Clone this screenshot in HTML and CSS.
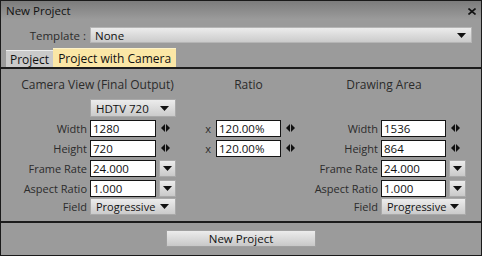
FILE: index.html
```html
<!DOCTYPE html>
<html>
<head>
<meta charset="utf-8">
<link rel="stylesheet" href="styles.css">
</head>
<body>
<div class="win">
  <div class="titlebar">
    <span class="title">New Project</span>
    <svg class="close" width="8" height="7" viewBox="0 0 8 7"><path d="M0.5 0.5 L7.5 6.5 M7.5 0.5 L0.5 6.5" stroke="#111" stroke-width="1.6" fill="none"/></svg>
  </div>
  <div class="top">
    <div class="tpl-row">
      <span class="tpl-label">Template :</span>
      <div class="select wide"><span>None</span><svg class="arrow" width="9" height="5" viewBox="0 0 9 5"><path d="M0 0 H9 L4.5 5 Z" fill="#111"/></svg></div>
    </div>
    <div class="tabs">
      <div class="tab">Project</div>
      <div class="tab active">Project with Camera</div>
    </div>
  </div>
  <div class="panel">
    <div class="grid">
      <div class="head h-left">Camera View (Final Output)</div>
      <div class="head h-ratio">Ratio</div>
      <div class="head h-right">Drawing Area</div>

      <div class="select small c-left r2"><span>HDTV 720</span><svg class="arrow" width="9" height="5" viewBox="0 0 9 5"><path d="M0 0 H9 L4.5 5 Z" fill="#111"/></svg></div>

      <div class="lbl ca r3">Width</div>
      <div class="inp cb r3">1280</div>
      <div class="spin cc r3"><svg width="9" height="8" viewBox="0 0 9 8"><path d="M4 0 L0 4 L4 8 Z M5 0 L9 4 L5 8 Z" fill="#111"/></svg></div>
      <div class="x cd r3">x</div>
      <div class="inp ce r3">120.00%</div>
      <div class="spin cf r3"><svg width="9" height="8" viewBox="0 0 9 8"><path d="M4 0 L0 4 L4 8 Z M5 0 L9 4 L5 8 Z" fill="#111"/></svg></div>
      <div class="lbl cg r3">Width</div>
      <div class="inp ch r3">1536</div>
      <div class="spin ci r3"><svg width="9" height="8" viewBox="0 0 9 8"><path d="M4 0 L0 4 L4 8 Z M5 0 L9 4 L5 8 Z" fill="#111"/></svg></div>

      <div class="lbl ca r4">Height</div>
      <div class="inp cb r4">720</div>
      <div class="spin cc r4"><svg width="9" height="8" viewBox="0 0 9 8"><path d="M4 0 L0 4 L4 8 Z M5 0 L9 4 L5 8 Z" fill="#111"/></svg></div>
      <div class="x cd r4">x</div>
      <div class="inp ce r4">120.00%</div>
      <div class="spin cf r4"><svg width="9" height="8" viewBox="0 0 9 8"><path d="M4 0 L0 4 L4 8 Z M5 0 L9 4 L5 8 Z" fill="#111"/></svg></div>
      <div class="lbl cg r4">Height</div>
      <div class="inp ch r4">864</div>
      <div class="spin ci r4"><svg width="9" height="8" viewBox="0 0 9 8"><path d="M4 0 L0 4 L4 8 Z M5 0 L9 4 L5 8 Z" fill="#111"/></svg></div>

      <div class="lbl ca r5">Frame Rate</div>
      <div class="inp cb r5">24.000</div>
      <div class="dbtn cc r5"><svg width="9" height="5" viewBox="0 0 9 5"><path d="M0 0 H9 L4.5 5 Z" fill="#111"/></svg></div>
      <div class="lbl cg r5">Frame Rate</div>
      <div class="inp ch r5">24.000</div>
      <div class="dbtn ci r5"><svg width="9" height="5" viewBox="0 0 9 5"><path d="M0 0 H9 L4.5 5 Z" fill="#111"/></svg></div>

      <div class="lbl ca r6">Aspect Ratio</div>
      <div class="inp cb r6">1.000</div>
      <div class="dbtn cc r6"><svg width="9" height="5" viewBox="0 0 9 5"><path d="M0 0 H9 L4.5 5 Z" fill="#111"/></svg></div>
      <div class="lbl cg r6">Aspect Ratio</div>
      <div class="inp ch r6">1.000</div>
      <div class="dbtn ci r6"><svg width="9" height="5" viewBox="0 0 9 5"><path d="M0 0 H9 L4.5 5 Z" fill="#111"/></svg></div>

      <div class="lbl ca r7">Field</div>
      <div class="select small c-left r7"><span>Progressive</span><svg class="arrow" width="9" height="5" viewBox="0 0 9 5"><path d="M0 0 H9 L4.5 5 Z" fill="#111"/></svg></div>
      <div class="lbl cg r7">Field</div>
      <div class="select small c-right r7"><span>Progressive</span><svg class="arrow" width="9" height="5" viewBox="0 0 9 5"><path d="M0 0 H9 L4.5 5 Z" fill="#111"/></svg></div>
    </div>
  </div>
  <div class="footer">
    <div class="btn">New Project</div>
  </div>
</div>
</body>
</html>
```
FILE: styles.css
```css
html, body {
  margin: 0;
  padding: 0;
  background: #9b9b9b;
}

.win {
  width: 482px;
  height: 256px;
  box-sizing: border-box;
  border: 1px solid #1a1a1a;
  background: #9b9b9b;
  display: flex;
  flex-direction: column;
  font-family: "Open Sans", "Noto Sans", sans-serif;
  font-size: 11px;
  color: #2b2b2b;
}

.titlebar {
  height: 19px;
  flex: none;
  background: linear-gradient(#7c7c7c, #9c9c9c);
  display: flex;
  align-items: center;
  justify-content: space-between;
  padding: 0 5px 0 5px;
}

.title {
  color: #111;
  font-size: 11.5px;
}

.close {
  display: block;
  margin-top: 2px;
}

.top {
  height: 47px;
  flex: none;
  display: flex;
  flex-direction: column;
}

.tpl-row {
  margin-top: 7px;
  height: 16px;
  display: flex;
  align-items: center;
}

.tpl-label {
  width: 85px;
  margin-right: 4px;
  text-align: right;
  font-size: 11.5px;
}

.select {
  box-sizing: border-box;
  height: 16px;
  background: linear-gradient(#ececec, #cbcbcb);
  border: 1px solid #b5b5b5;
  display: flex;
  align-items: center;
  justify-content: space-between;
  padding: 0 5px 0 4px;
  color: #111;
}

.select.wide {
  width: 382px;
  font-size: 11.5px;
}

.select .arrow {
  display: block;
}

.tabs {
  margin-top: 5px;
  height: 19px;
  display: flex;
  align-items: flex-end;
  padding-left: 5px;
}

.tab {
  height: 17px;
  box-sizing: border-box;
  background: #cacaca;
  border-top: 1px solid #ececec;
  padding: 0 4px;
  display: flex;
  align-items: center;
  color: #111;
  font-size: 12px;
}

.tab.active {
  height: 19px;
  background: #fbe7a6;
  border-top: 1px solid #fdf2c8;
  padding: 0 5px;
}

.panel {
  height: 154px;
  flex: none;
  box-sizing: border-box;
  border-top: 2px solid #1c1c1c;
}

.grid {
  padding-top: 5px;
  display: grid;
  grid-template-columns: 89px 66px 20px 40px 65px 20px 80px 65px 21px;
  grid-template-rows: 24px repeat(5, 20px);
  align-items: center;
}

.head {
  grid-row: 1;
  text-align: center;
  color: #2b2b2b;
  align-self: start;
  padding-top: 2px;
  font-size: 12px;
}

.h-left { grid-column: 1 / 4; padding-left: 18px; }
.h-ratio { grid-column: 5; }
.h-right { grid-column: 7 / 10; }

.r2 { grid-row: 2; }
.r3 { grid-row: 3; }
.r4 { grid-row: 4; }
.r5 { grid-row: 5; }
.r6 { grid-row: 6; }
.r7 { grid-row: 7; }

.ca { grid-column: 1; }
.cb { grid-column: 2; }
.cc { grid-column: 3; }
.cd { grid-column: 4; }
.ce { grid-column: 5; }
.cf { grid-column: 6; }
.cg { grid-column: 7; }
.ch { grid-column: 8; }
.ci { grid-column: 9; }
.c-left { grid-column: 2 / 4; }
.c-right { grid-column: 8 / 10; margin-right: 1px; }

.grid .select.small {
  height: 17px;
  padding-left: 5px;
  padding-right: 6px;
  border-color: #a9a9a9;
}

.grid > .select.r2 {
  height: 18px;
  font-size: 11.5px;
}

.lbl {
  text-align: right;
  padding-right: 3px;
}

.x {
  text-align: right;
  padding-right: 5px;
}

.inp {
  box-sizing: border-box;
  height: 17px;
  background: #fff;
  border: 1px solid #141414;
  color: #111;
  padding-left: 2px;
  line-height: 15px;
  font-size: 11.5px;
}

.spin {
  padding-left: 5px;
  display: flex;
  align-items: center;
}

.spin svg { display: block; }

.dbtn {
  justify-self: end;
  box-sizing: border-box;
  width: 17px;
  height: 17px;
  background: linear-gradient(#ececec, #c9c9c9);
  border: 1px solid #a9a9a9;
  display: flex;
  align-items: center;
  justify-content: center;
}

.dbtn.ci { margin-right: 1px; }

.footer {
  flex: 1;
  box-sizing: border-box;
  border-top: 2px solid #1c1c1c;
  display: flex;
  justify-content: center;
  padding-top: 7px;
}

.btn {
  box-sizing: border-box;
  width: 150px;
  height: 17px;
  background: linear-gradient(#ececec, #c8c8c8);
  border: 1px solid #a0a0a0;
  display: flex;
  align-items: center;
  justify-content: center;
  color: #111;
  font-size: 11.5px;
}
```
